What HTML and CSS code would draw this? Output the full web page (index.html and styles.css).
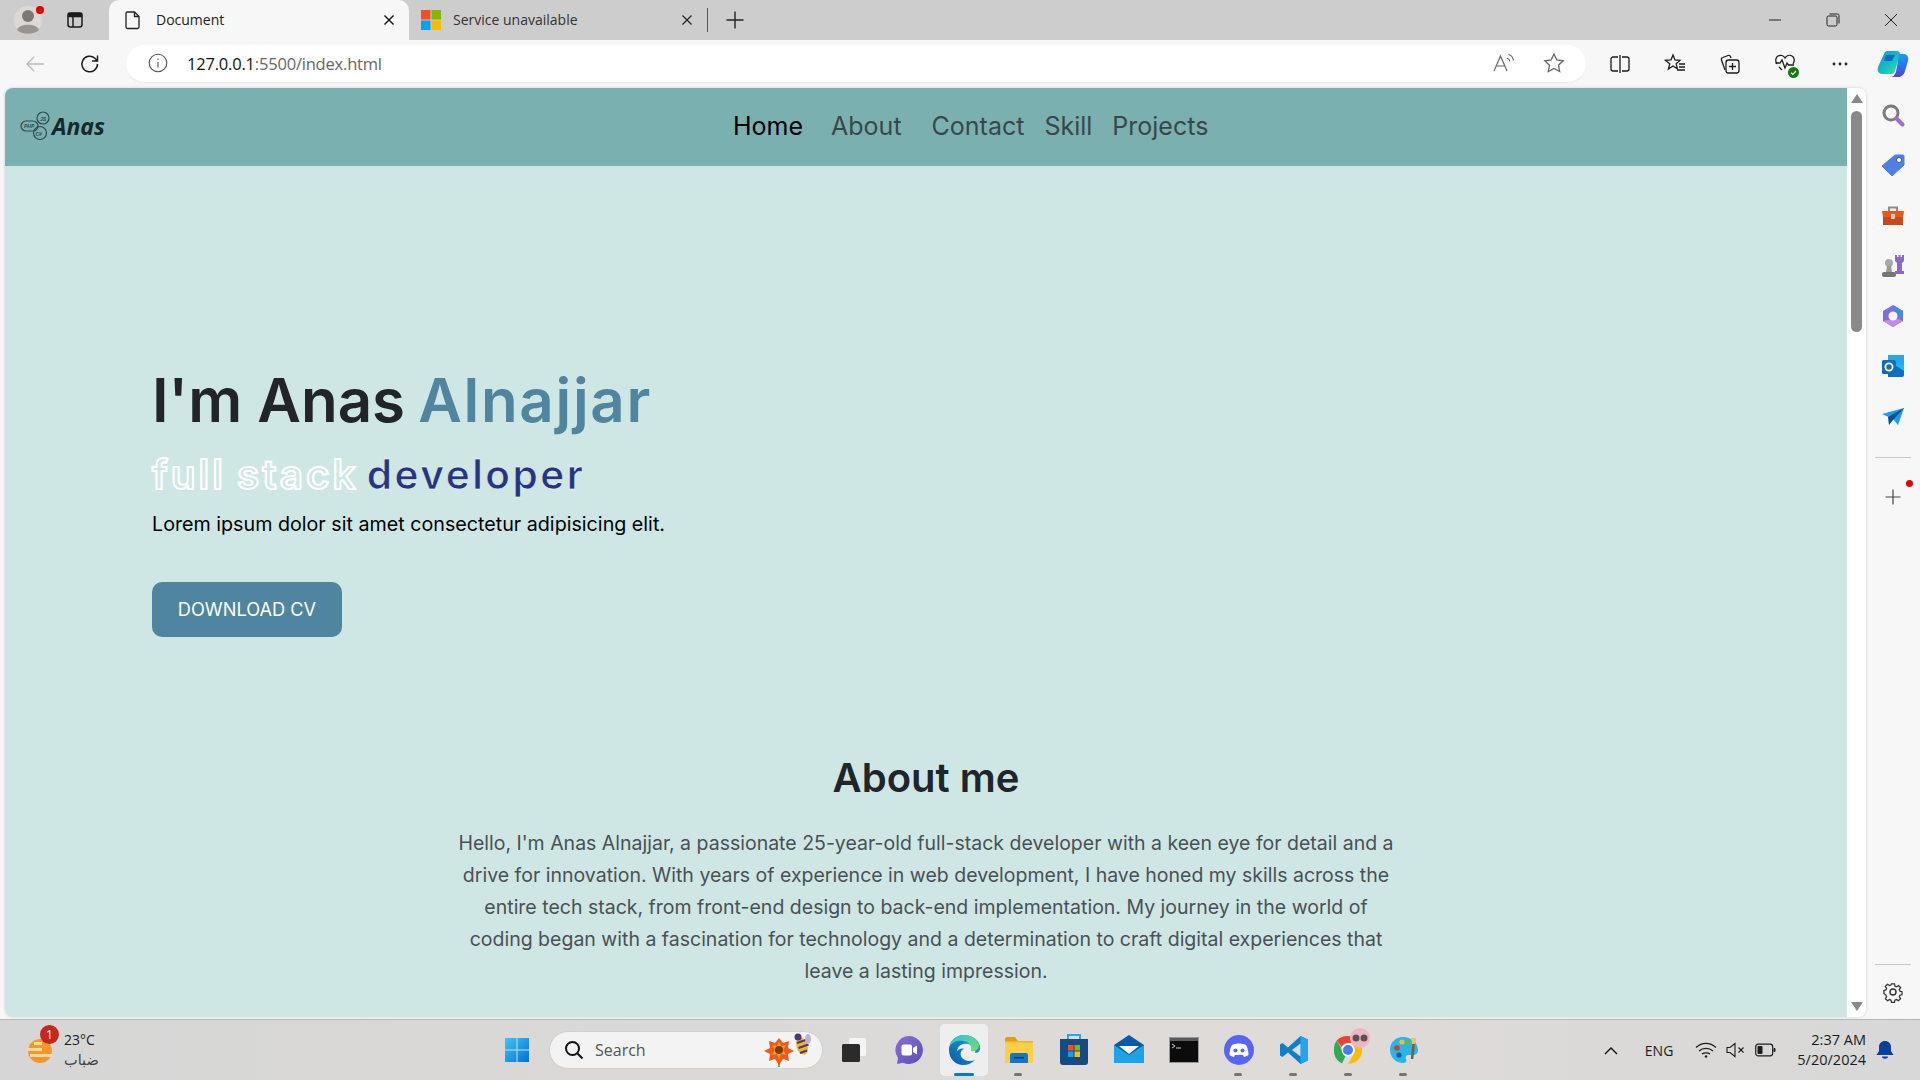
FILE: index.html
```html
<!DOCTYPE html>
<html lang="en">
<head>
  <meta charset="UTF-8">
  <title>Document</title>
  <link rel="stylesheet" href="styles.css">
</head>
<body>

<div class="tabstrip">
  <div class="profile">
    <svg width="34" height="34" viewBox="0 0 34 34"><circle cx="17" cy="17" r="14" fill="#dbd9d6"/><circle cx="17" cy="13" r="6" fill="#7d7875"/><path d="M6 27c2-7 20-7 22 0-5 5-17 5-22 0z" fill="#9a9591"/></svg>
    <span class="profile-dot"></span>
  </div>
  <div class="strip-btn">
    <svg width="20" height="20" viewBox="0 0 20 20" fill="none" stroke="#1c1c1c" stroke-width="1.5"><rect x="3" y="3" width="14" height="14" rx="2.5"/><path d="M8 6.5V17"/><path d="M3.5 3.5h13v3h-13z" fill="#1c1c1c"/></svg>
  </div>
  <div class="tab tab-active">
    <svg width="18" height="20" viewBox="0 0 18 20" fill="none" stroke="#222" stroke-width="1.3"><path d="M3.5 2h7l4.5 4.5V17a1.5 1.5 0 0 1-1.5 1.5h-10A1.5 1.5 0 0 1 2 17V3.5A1.5 1.5 0 0 1 3.5 2z"/><path d="M10.5 2v4.5H15"/></svg>
    <span class="tab-title">Document</span>
    <svg class="tab-close" width="12" height="12" viewBox="0 0 12 12" stroke="#111" stroke-width="1.4"><path d="M1.5 1.5l9 9M10.5 1.5l-9 9"/></svg>
  </div>
  <div class="tab">
    <svg width="20" height="20" viewBox="0 0 20 20"><rect width="9.5" height="9.5" fill="#f25022"/><rect x="10.5" width="9.5" height="9.5" fill="#7fba00"/><rect y="10.5" width="9.5" height="9.5" fill="#00a4ef"/><rect x="10.5" y="10.5" width="9.5" height="9.5" fill="#ffb900"/></svg>
    <span class="tab-title">Service unavailable</span>
    <svg class="tab-close" width="12" height="12" viewBox="0 0 12 12" stroke="#222" stroke-width="1.2"><path d="M1.5 1.5l9 9M10.5 1.5l-9 9"/></svg>
  </div>
  <span class="tab-sep"></span>
  <svg class="new-tab" width="20" height="20" viewBox="0 0 20 20" stroke="#222" stroke-width="1.4"><path d="M10 1.5v17M1.5 10h17"/></svg>
  <div class="win-controls">
    <svg width="14" height="14" viewBox="0 0 14 14" stroke="#222" stroke-width="1"><path d="M1 7h12"/></svg>
    <svg width="14" height="14" viewBox="0 0 14 14" fill="none" stroke="#222" stroke-width="1"><rect x="1" y="3" width="10" height="10" rx="1.5"/><path d="M3.5 1h8a1.5 1.5 0 0 1 1.5 1.5v8"/></svg>
    <svg width="14" height="14" viewBox="0 0 14 14" stroke="#222" stroke-width="1"><path d="M1 1l12 12M13 1L1 13"/></svg>
  </div>
</div>

<div class="toolbar">
  <svg class="tool-back" width="22" height="22" viewBox="0 0 22 22" fill="none" stroke="#bdbdbd" stroke-width="1.4"><path d="M20 11H3M10 4l-7 7 7 7"/></svg>
  <svg class="tool-reload" width="22" height="22" viewBox="0 0 22 22" fill="none" stroke="#1c1c1c" stroke-width="1.5"><path d="M18.5 11a7.8 7.8 0 1 1-2.6-5.8L18.5 8M18.5 2.5V8H13"/></svg>
  <div class="address">
    <svg width="20" height="20" viewBox="0 0 20 20" fill="none" stroke="#555" stroke-width="1.1"><circle cx="10" cy="10" r="8.8"/><path d="M10 9v5.5M10 5.6v1.4"/></svg>
    <span class="url"><b>127.0.0.1</b>:5500/index.html</span>
    <svg class="addr-read" width="24" height="22" viewBox="0 0 24 22" fill="none" stroke="#666" stroke-width="1.2"><path d="M2 19L8.5 4 15 19M4.5 14h8"/><path d="M15 6c1.500.5 2.500 1.700 3 3.500M16.500 2.500c2.800.7 4.500 3 5 6"/></svg>
    <svg class="addr-star" width="22" height="22" viewBox="0 0 22 22" fill="none" stroke="#666" stroke-width="1.3"><path d="M11 2l2.800 6 6.400.8-4.700 4.400 1.200 6.300L11 16.400l-5.700 3.100 1.200-6.300L1.800 8.800 8.200 8z"/></svg>
  </div>
  <div class="tool-icons">
    <svg width="22" height="22" viewBox="0 0 22 22" fill="none" stroke="#1c1c1c" stroke-width="1.3"><path d="M9 4H4a2 2 0 0 0-2 2v10a2 2 0 0 0 2 2h5M13 4h5a2 2 0 0 1 2 2v10a2 2 0 0 1-2 2h-5M11 2v18"/></svg>
    <svg width="22" height="22" viewBox="0 0 22 22" fill="none" stroke="#1c1c1c" stroke-width="1.3"><path d="M9 2l2 5 5 .4-3.800 3.400 1.200 5-4.400-2.800-4.600 3 1.300-5.200L1.500 7.400 7 7z"/><path d="M15 11h6M15 14h6M13 17h8"/></svg>
    <svg width="22" height="22" viewBox="0 0 22 22" fill="none" stroke="#1c1c1c" stroke-width="1.3"><path d="M6 17L2.500 7a2 2 0 0 1 1.300-2.500L9 2.500a2 2 0 0 1 2.500 1L12 5"/><rect x="7" y="7" width="13" height="13" rx="2.500"/><path d="M13.500 10v7M10 13.500h7"/></svg>
    <div class="health">
      <svg width="22" height="22" viewBox="0 0 22 22" fill="none" stroke="#1c1c1c" stroke-width="1.3"><path d="M3 11C1 8 1.500 4.500 4 3c2.500-1.500 5.500-.5 7 2 1.500-2.500 4.500-3.500 7-2 2.500 1.500 3 5 1 8"/><path d="M1.500 10H6l2-3 3 8 2-5 1.500 2H20M5 14l3 3"/></svg>
      <svg class="health-ok" width="11" height="11" viewBox="0 0 11 11"><circle cx="5.500" cy="5.500" r="5.500" fill="#107c10"/><path d="M3 5.700l1.800 1.700L8 4" fill="none" stroke="#fff" stroke-width="1.200"/></svg>
    </div>
    <svg width="22" height="22" viewBox="0 0 22 22" fill="#222"><circle cx="5" cy="11" r="1.400"/><circle cx="11" cy="11" r="1.400"/><circle cx="17" cy="11" r="1.400"/></svg>
  </div>
  <svg class="copilot" width="32" height="28" viewBox="0 0 32 28">
    <defs>
      <linearGradient id="copA" x1="0" y1="0" x2="1" y2="1"><stop offset="0" stop-color="#0f8fd8"/><stop offset=".6" stop-color="#19c3c0"/><stop offset="1" stop-color="#52e0a0"/></linearGradient>
      <linearGradient id="copB" x1="0" y1="0" x2="0" y2="1"><stop offset="0" stop-color="#1f9cf0"/><stop offset=".6" stop-color="#2c6ee8"/><stop offset="1" stop-color="#5a3fd0"/></linearGradient>
    </defs>
    <path d="M11 1h9c2 0 2.500 1 3 3l-5 17c-.5 2-2 3-4 3H5C1 24 0 20 1 17L7 4c.6-2 2-3 4-3z" fill="url(#copA)"/>
    <path d="M22 4h5c3 0 5 3 4 7l-3 10c-1 4-4 6-7 6H13c3 0 5-2 6-5z" fill="url(#copB)"/>
    <path d="M9 5h9l-3 6H7z" fill="#0b6fc0"/>
  </svg>
</div>

<div class="viewport">
  <div class="page-frame">
    <main class="page">
      <nav class="nav">
        <a class="logo">
          <svg width="32" height="30" viewBox="0 0 32 30" fill="none" stroke="#2e4a4c" stroke-width="1.2">
            <rect x="1" y="10" width="17" height="10" rx="5"/><circle cx="23" cy="7" r="6"/><circle cx="20" cy="22" r="6.500"/>
            <text x="4" y="17" class="logo-tiny">PHP</text><text x="20" y="10" class="logo-tiny">JS</text><text x="15.500" y="25" class="logo-tiny">C#</text>
          </svg>
          <span>Anas</span>
        </a>
        <div class="nav-links">
          <a class="nav-link nav-link-current">Home</a>
          <a class="nav-link">About</a>
          <a class="nav-link">Contact</a>
          <a class="nav-link">Skill</a>
          <a class="nav-link">Projects</a>
        </div>
      </nav>

      <section class="hero">
        <h1>I'm Anas <span class="accent">Alnajjar</span></h1>
        <h2><span class="outline">full stack</span> <span class="role">developer</span></h2>
        <p>Lorem ipsum dolor sit amet consectetur adipisicing elit.</p>
        <a class="btn">DOWNLOAD CV</a>
      </section>

      <section class="about">
        <h3>About me</h3>
        <p>Hello, I'm Anas Alnajjar, a passionate 25-year-old full-stack developer with a keen eye for detail and a drive for innovation. With years of experience in web development, I have honed my skills across the entire tech stack, from front-end design to back-end implementation. My journey in the world of coding began with a fascination for technology and a determination to craft digital experiences that leave a lasting impression.</p>
      </section>
    </main>
    <div class="scrollbar">
      <span class="arrow-up"></span>
      <span class="thumb"></span>
      <span class="arrow-down"></span>
    </div>
  </div>

  <aside class="sidebar">
    <svg width="24" height="24" viewBox="0 0 24 24" fill="none"><circle cx="10" cy="10" r="7" stroke="#7b7b7b" stroke-width="3"/><path d="M15.500 15.500l6 6" stroke="#9a6fd0" stroke-width="4" stroke-linecap="round"/></svg>
    <svg width="24" height="24" viewBox="0 0 24 24"><path d="M14 2h8a1 1 0 0 1 1 1v9L11 23 1 13z" fill="#4f80e0" stroke="#4f80e0" stroke-linejoin="round"/><circle cx="18" cy="7" r="2.500" fill="#fff" stroke="#2f55a8"/></svg>
    <svg width="24" height="24" viewBox="0 0 24 24"><path d="M8 7V3.500h8V7" fill="none" stroke="#8a8a8a" stroke-width="2"/><path d="M1 7h22l-1 6H2z" fill="#e8591f"/><path d="M2 13h20v8H2z" fill="#c8481a"/><rect x="10" y="10" width="4" height="5" fill="#c9c9c9"/></svg>
    <svg width="24" height="24" viewBox="0 0 24 24"><circle cx="8" cy="9" r="4" fill="#a9a9a9"/><path d="M6 12h4l1 6H5z" fill="#9a9a9a"/><rect x="1" y="18" width="14" height="5" rx="2" fill="#757575"/><path d="M14 1h2v2h1.500V1h2v2H21V1h2v6l-2 2v8h2v3h-9v-3h2V9l-2-2z" fill="#8e68c8"/></svg>
    <svg width="24" height="24" viewBox="0 0 24 24"><path d="M12 1l10 6v10l-10 6L2 17V7z" fill="#7c6fe0"/><path d="M12 1l10 6v6l-7-4z" fill="#3d8fe0"/><path d="M2 17l10 6 10-6-7-3z" fill="#c58ae8"/><circle cx="12" cy="12" r="4.500" fill="#f7f7f7"/></svg>
    <svg width="24" height="24" viewBox="0 0 24 24"><rect x="7" y="1" width="16" height="10" fill="#28a8ea"/><path d="M7 11h16v10a2 2 0 0 1-2 2H7z" fill="#0a6fc4"/><path d="M14 11l9 6v-6z" fill="#14c0f0"/><rect x="1" y="6" width="14" height="14" rx="1.500" fill="#0f6cbd"/><circle cx="8" cy="13" r="3.600" fill="none" stroke="#fff" stroke-width="1.800"/></svg>
    <svg width="24" height="24" viewBox="0 0 24 24"><path d="M1 9L23 3l-6 17-5-6z" fill="#1c9be6"/><path d="M23 3L7 12l1 8 4-5z" fill="#0d4e8e"/></svg>
    <span class="side-rule"></span>
    <div class="side-add">
      <svg width="16" height="16" viewBox="0 0 16 16" stroke="#444" stroke-width="1.200"><path d="M8 .5v15M.5 8h15"/></svg>
      <span class="side-dot"></span>
    </div>
    <span class="side-rule side-rule-low"></span>
    <svg class="side-gear" width="22" height="22" viewBox="0 0 22 22" fill="none" stroke="#333" stroke-width="1.400"><circle cx="11" cy="11" r="3"/><path d="M9.300 2h3.400l.5 2.600 1.700.7 2.200-1.500 2.400 2.400-1.500 2.200.7 1.700 2.300.6v3.400l-2.300.5-.7 1.700 1.400 2.100-2.400 2.400-2.200-1.400-1.700.7-.5 2.300H9.300l-.5-2.300-1.700-.7-2.200 1.400-2.400-2.400 1.400-2.100-.7-1.700L.9 12.700V9.300l2.300-.6.700-1.700-1.500-2.200 2.400-2.400 2.200 1.500 1.700-.7z" transform="translate(1.100 1.100) scale(.9)"/></svg>
  </aside>
</div>

<footer class="taskbar">
  <div class="weather">
    <div class="weather-icon">
      <svg width="32" height="32" viewBox="0 0 32 32"><circle cx="16" cy="17" r="12" fill="#f4972a"/><path d="M2 14h16v3H2zM6 20h22v3H6z" fill="#f0d9a8"/><path d="M10 8h8v3h-8z" fill="#f5dd8f"/></svg>
      <span class="weather-badge">1</span>
    </div>
    <div class="weather-text">
      <span>23°C</span>
      <span class="weather-desc">ضباب</span>
    </div>
  </div>

  <div class="task-center">
    <div class="task-item">
      <svg width="26" height="26" viewBox="0 0 26 26"><defs><linearGradient id="winG" x1="0" y1="0" x2="1" y2="1"><stop offset="0" stop-color="#3fc5f7"/><stop offset="1" stop-color="#0072d2"/></linearGradient></defs><path d="M1 1h11.500v11.500H1zM13.500 1H25v11.500H13.500zM1 13.500h11.500V25H1zM13.500 13.500H25V25H13.500z" fill="url(#winG)"/></svg>
    </div>
    <div class="search">
      <svg width="20" height="20" viewBox="0 0 20 20" fill="none" stroke="#111" stroke-width="2"><circle cx="8.500" cy="8.500" r="6.500"/><path d="M13.500 13.500l5 5"/></svg>
      <span>Search</span>
      <svg class="search-art" width="50" height="34" viewBox="0 0 50 34"><path d="M15 30v4" stroke="#5d8a2c" stroke-width="1.500"/><path d="M15 5l4 5 6-2-1 7 6 3-6 3 1 7-6-2-4 6-4-6-6 2 1-7-6-3 6-3-1-7 6 2z" fill="#ef5a1c"/><path d="M15 8l2 5 5-1-3 5 3 5-5-1-2 5-2-5-5 1 3-5-3-5 5 1z" fill="#f9a11b"/><circle cx="15" cy="17" r="4" fill="#7a3c12"/><ellipse cx="38" cy="13" rx="5.500" ry="9" transform="rotate(-20 38 13)" fill="#f0b429"/><path d="M33 10l10-3.500M34.500 15l10-3.500M36 20l7-2.500" stroke="#4a3a78" stroke-width="2"/><circle cx="34" cy="4" r="3.500" fill="#4a3a78"/><ellipse cx="44" cy="6" rx="3" ry="5" fill="#b9b3df"/></svg>
    </div>
    <div class="task-item">
      <svg width="28" height="28" viewBox="0 0 28 28"><rect x="9" y="2" width="17" height="18" rx="1.500" fill="#f4f4f4"/><rect x="2" y="8" width="18" height="18" rx="1.500" fill="#2b2b2b"/></svg>
    </div>
    <div class="task-item">
      <svg width="30" height="30" viewBox="0 0 30 30"><defs><linearGradient id="meetG" x1="0" y1="0" x2="1" y2="1"><stop offset="0" stop-color="#8a6fd8"/><stop offset="1" stop-color="#5b4fb0"/></linearGradient></defs><path d="M15 1a14 14 0 1 1-6 26.700L3 29l1-6A14 14 0 0 1 15 1z" fill="url(#meetG)"/><rect x="7.500" y="9.500" width="10.500" height="11" rx="2" fill="#fff"/><path d="M19 13l4-2.500v9L19 17z" fill="#fff"/></svg>
    </div>
    <div class="task-item task-active">
      <svg width="32" height="32" viewBox="0 0 32 32"><defs><linearGradient id="edgeA" x1="0" y1="1" x2="1" y2="0"><stop offset="0" stop-color="#0c59a4"/><stop offset="1" stop-color="#1ba9e0"/></linearGradient><linearGradient id="edgeB" x1="0" y1="0" x2="1" y2="1"><stop offset="0" stop-color="#28c2e0"/><stop offset="1" stop-color="#7ddc6a"/></linearGradient></defs><path d="M16 1C7 1 1 8 1 16c0 9 7 15 14 15 5 0 9-2 12-5-5 2-12 1-14-4-1-3 0-6 3-7-2-1-5 0-7 2 1-6 6-8 11-7 6 1 8 5 7 9 4 0 6-3 5-7C31 6 24 1 16 1z" fill="url(#edgeA)"/><path d="M16 1C8 1 3 6 2 12c3-5 9-6 13-5 7 1 9 6 8 10 4 1 8-2 8-6C30 5 23 1 16 1z" fill="url(#edgeB)"/></svg>
      <span class="task-mark task-mark-blue"></span>
    </div>
    <div class="task-item">
      <svg width="30" height="28" viewBox="0 0 30 28"><path d="M1 3a2 2 0 0 1 2-2h8l3 4v4H1z" fill="#dda011"/><rect x="1" y="5" width="28" height="22" rx="1.500" fill="#fbd046"/><rect x="1" y="5" width="28" height="1.500" fill="#f2b32a"/><path d="M6 19a2 2 0 0 1 2-2h14a2 2 0 0 1 2 2v8H6z" fill="#1277c9"/><rect x="10" y="21" width="10" height="1.500" fill="#0b3a70"/></svg>
      <span class="task-mark"></span>
    </div>
    <div class="task-item">
      <svg width="30" height="32" viewBox="0 0 30 32"><path d="M9 5V1h12v4" fill="none" stroke="#2aa6e0" stroke-width="2"/><path d="M1 5h28v23a3 3 0 0 1-3 3H4a3 3 0 0 1-3-3z" fill="#154a85"/><rect x="9" y="11" width="5.500" height="5.500" fill="#f25022"/><rect x="15.500" y="11" width="5.500" height="5.500" fill="#7fba00"/><rect x="9" y="17.500" width="5.500" height="5.500" fill="#00a4ef"/><rect x="15.500" y="17.500" width="5.500" height="5.500" fill="#ffb900"/></svg>
    </div>
    <div class="task-item">
      <svg width="30" height="30" viewBox="0 0 30 30"><path d="M15 0l15 10v18H0V10z" fill="#0a5aa8"/><path d="M0 10v18h30V10L15 20z" fill="#1ea2e8"/><path d="M5 11h20l-10 8z" fill="#f4f8fb"/></svg>
    </div>
    <div class="task-item">
      <svg width="30" height="26" viewBox="0 0 30 26"><rect x=".5" y=".5" width="29" height="25" fill="#0c0c0c" stroke="#9a9a9a"/><rect x="1" y="1" width="28" height="3" fill="#5a5a5a"/><path d="M3 7l3 2-3 2M7 11h5" stroke="#ccc" fill="none"/></svg>
    </div>
    <div class="task-item">
      <svg width="30" height="30" viewBox="0 0 30 30"><circle cx="15" cy="15" r="15" fill="#5865f2"/><path d="M8 10c4-2 10-2 14 0 2 3 2.500 7 2.500 10-1.500 1-3 1.700-4.500 2l-1-2h-8l-1 2c-1.500-.3-3-1-4.500-2C5.500 17 6 13 8 10z" fill="#fff"/><circle cx="11.500" cy="15.500" r="2" fill="#5865f2"/><circle cx="18.500" cy="15.500" r="2" fill="#5865f2"/></svg>
      <span class="task-mark"></span>
    </div>
    <div class="task-item">
      <svg width="30" height="30" viewBox="0 0 30 30"><path d="M21.500 1L29 4.500v21L21.500 29 9 17.500 3.500 22 1 20.500V9.500L3.500 8 9 12.500z" fill="#0f7fcc"/><path d="M21.500 1L29 4.500v21L21.500 29z" fill="#22a5ec"/><path d="M21.500 8.500L13 15l8.500 6.500z" fill="#dcdcdc"/></svg>
      <span class="task-mark"></span>
    </div>
    <div class="task-item">
      <svg width="32" height="32" viewBox="0 0 32 32"><path d="M15 2a14 14 0 0 1 12.200 7H15a7 7 0 0 0-6.300 4L3.800 6.500A14 14 0 0 1 15 2z" fill="#ea4335"/><path d="M1 16A14 14 0 0 1 3.800 6.500L9.500 16a6 6 0 0 0 3 6l-3.500 7.500A14 14 0 0 1 1 16z" fill="#34a853"/><path d="M27.200 9A14 14 0 0 1 15 30l5.500-9.500A6 6 0 0 0 20 12z" fill="#fbbc05"/><circle cx="15" cy="16" r="6.500" fill="#fff"/><circle cx="15" cy="16" r="5" fill="#3f7fee"/></svg>
      <span class="chrome-avatar"><svg width="20" height="20" viewBox="0 0 20 20"><circle cx="10" cy="10" r="10" fill="#f0b6c0"/><circle cx="6" cy="10" r="3.500" fill="#555"/><circle cx="14" cy="10" r="3.500" fill="#555"/></svg></span>
      <span class="task-mark"></span>
    </div>
    <div class="task-item">
      <svg width="30" height="30" viewBox="0 0 30 30"><path d="M14 2C6 2 1 8 1 15s6 13 13 13c3 0 4-2 3-4s0-4 3-4h4c3 0 5-2 5-5C29 8 22 2 14 2z" fill="#2ab4ec"/><circle cx="8" cy="13" r="2.800" fill="#c8402c"/><circle cx="13" cy="7" r="2.600" fill="#f2c21b"/><circle cx="19" cy="8" r="2.400" fill="#6bb83e"/><circle cx="10" cy="20" r="2.600" fill="#0b5ea8"/><path d="M25 6l-2 18" stroke="#8b5a2b" stroke-width="2.500"/><path d="M22 3h5l-1 6h-3z" fill="#e8c070"/></svg>
      <span class="task-mark"></span>
    </div>
  </div>

  <div class="tray">
    <svg class="tray-chevron" width="14" height="9" viewBox="0 0 14 9" fill="none" stroke="#111" stroke-width="1.400"><path d="M1 8l6-6 6 6"/></svg>
    <span class="tray-lang">ENG</span>
    <svg class="tray-wifi" width="22" height="16" viewBox="0 0 22 16" fill="none" stroke="#1c1c1c" stroke-width="1.300"><path d="M1 5.500c6-5.500 14-5.500 20 0M4 9c4-3.500 10-3.500 14 0M7 12c2-1.600 6-1.600 8 0"/><circle cx="11" cy="14.500" r="1.200" fill="#1c1c1c" stroke="none"/></svg>
    <svg class="tray-vol" width="20" height="16" viewBox="0 0 20 16" fill="none" stroke="#1c1c1c" stroke-width="1.100"><path d="M1 5.500h3L9 1.500v13l-5-4H1z"/><path d="M12.500 5.500l5 5M17.500 5.500l-5 5"/></svg>
    <svg class="tray-batt" width="21" height="14" viewBox="0 0 21 14"><rect x=".7" y="1.200" width="17" height="11.600" rx="2.500" fill="none" stroke="#1c1c1c" stroke-width="1.200"/><rect x="2.500" y="3" width="5" height="8" rx="1" fill="#1c1c1c"/><rect x="18.500" y="5" width="2" height="4" rx="1" fill="#1c1c1c"/></svg>
    <div class="tray-clock">
      <span>2:37 AM</span>
      <span>5/20/2024</span>
    </div>
    <svg class="tray-bell" width="18" height="20" viewBox="0 0 18 20"><path d="M9 1c3.500 0 6 2.500 6 6v4l2.500 4H.5L3 11V7c0-3.500 2.500-6 6-6z" fill="#0a3f9c"/><path d="M6 16.500h6c0 3-6 3-6 0z" fill="#0a3f9c"/></svg>
  </div>
</footer>

</body>
</html>
```

FILE: styles.css
```css
* {
  box-sizing: border-box;
}

body {
  margin: 0;
  height: 100vh;
  overflow: hidden;
  display: flex;
  flex-direction: column;
  font-family: "Open Sans", "Noto Sans", sans-serif;
  background-color: #f7f7f7;
  color: #1c1c1c;
}

svg {
  display: block;
  flex-shrink: 0;
}

/* tab strip */
.tabstrip {
  height: 40px;
  display: flex;
  align-items: center;
  background-color: #cdcdcd;
  padding-left: 11px;
}

.profile {
  position: relative;
  width: 34px;
  height: 34px;
}

.profile-dot {
  position: absolute;
  top: 3px;
  right: 1px;
  width: 8px;
  height: 8px;
  border-radius: 50%;
  background-color: #e20000;
}

.strip-btn {
  margin-left: 20px;
  width: 44px;
}

.tab {
  width: 300px;
  height: 40px;
  display: flex;
  align-items: center;
  padding: 0 14px 0 12px;
  font-size: 14px;
}

.tab-active {
  background-color: #f7f7f7;
  border-radius: 10px 10px 0 0;
  padding-left: 15px;
  color: #222;
}

.tab-title {
  margin-left: 14px;
  padding-bottom: 2px;
  flex: 1;
}

.tab-active + .tab {
  width: 298px;
  color: #333;
}

.tab-active + .tab .tab-title {
  margin-left: 12px;
}

.tab-sep {
  width: 1px;
  height: 24px;
  background-color: #555;
}

.new-tab {
  margin-left: 17px;
}

.win-controls {
  margin-left: auto;
  display: flex;
  gap: 44px;
  padding-right: 22px;
}

/* toolbar */
.toolbar {
  height: 48px;
  display: flex;
  align-items: center;
  padding-left: 24px;
  background-color: #f7f7f7;
}

.tool-reload {
  margin-left: 33px;
}

.address {
  width: 1460px;
  height: 37px;
  margin-left: 25px;
  margin-bottom: 2px;
  padding: 0 21px 0 22px;
  display: flex;
  align-items: center;
  background-color: #fff;
  border-radius: 19px;
  box-shadow: 0 1px 2px rgba(0, 0, 0, 0.06);
}

.url {
  margin-left: 19px;
  font-size: 16.5px;
  color: #666;
  flex: 1;
  letter-spacing: -0.2px;
}

.url b {
  font-weight: 400;
  color: #111;
}

.addr-star {
  margin-left: 27px;
}

.tool-icons {
  display: flex;
  align-items: center;
  gap: 33px;
  margin-left: 23px;
}

.health {
  position: relative;
}

.health-ok {
  position: absolute;
  right: -3px;
  bottom: -3px;
}

.copilot {
  margin-left: 26px;
}

/* page area */
.viewport {
  height: 931px;
  display: flex;
  padding-left: 5px;
}

.page-frame {
  display: flex;
  width: 1861px;
  height: 929px;
  border-radius: 8px;
  overflow: hidden;
  box-shadow: 0 0 3px rgba(0, 0, 0, 0.18);
}

.page {
  width: 1842px;
  background-color: #cee7e4;
  font-family: Inter, sans-serif;
}

.nav {
  height: 78px;
  display: flex;
  align-items: center;
  padding: 0 0 2px 15px;
  background-color: #7ab0b0;
}

.logo {
  display: flex;
  align-items: center;
  width: 713px;
  font-family: "Open Sans", sans-serif;
  font-weight: 700;
  font-style: italic;
  font-size: 23px;
  color: #16282a;
}

.logo-tiny {
  font-family: "Liberation Sans", sans-serif;
  font-size: 5px;
  font-weight: 700;
  fill: #2e4a4c;
  stroke: none;
}

.nav-links {
  display: flex;
  font-size: 25px;
}

.nav-link {
  color: #38484a;
  margin-right: 20px;
}

.nav-link:nth-child(2) {
  margin-right: 30px;
}

.nav-link-current {
  color: #000;
  margin-right: 28px;
}

.hero {
  padding: 197px 0 0 147px;
}

h1 {
  margin: 0;
  font-size: 60px;
  font-weight: 600;
  line-height: 74px;
  color: #212529;
}

.accent {
  margin-left: -2px;
  color: #4f859e;
  letter-spacing: 1.7px;
}

h2 {
  margin: 14px 0 0;
  font-size: 40.5px;
  font-weight: 600;
  line-height: 48px;
  word-spacing: -2px;
}

.outline {
  color: transparent;
  letter-spacing: 3px;
  -webkit-text-stroke: 2px #fff;
}

.role {
  color: #263580;
  letter-spacing: 2.5px;
  -webkit-text-stroke: 0.5px #fff;
}

.hero p {
  margin: 10px 0 0;
  font-size: 19.7px;
  line-height: 30px;
  color: #000;
}

.btn {
  display: inline-block;
  margin-top: 43px;
  width: 190px;
  height: 55px;
  line-height: 55px;
  text-align: center;
  font-size: 18.2px;
  font-weight: 400;
  color: #fff;
  background-color: #4f859e;
  border-radius: 10px;
}

.about {
  margin-top: 118px;
  text-align: center;
}

h3 {
  margin: 0;
  font-size: 40px;
  font-weight: 600;
  line-height: 46px;
  color: #212529;
}

.about p {
  width: 950px;
  margin: 26px auto 0;
  font-size: 19.5px;
  line-height: 32px;
  color: #4a5054;
}

.scrollbar {
  width: 19px;
  padding-top: 6px;
  display: flex;
  flex-direction: column;
  align-items: center;
  background-color: #fff;
}

.arrow-up {
  border: solid transparent;
  border-width: 0 6.5px 9px;
  border-bottom-color: #8a8a8a;
}

.thumb {
  width: 11px;
  height: 221px;
  margin-top: 8px;
  border-radius: 6px;
  background-color: #8a8a8a;
}

.arrow-down {
  margin-top: auto;
  margin-bottom: 6px;
  border: solid transparent;
  border-width: 9px 6.5px 0;
  border-top-color: #8a8a8a;
}

.sidebar {
  width: 54px;
  display: flex;
  flex-direction: column;
  align-items: center;
  padding-top: 15px;
  gap: 26.300px;
}

.side-rule {
  width: 36px;
  height: 1px;
  margin-top: 2px;
  background-color: #c8c8c8;
}

.side-rule-low {
  margin-top: auto;
}

.side-add {
  position: relative;
  margin-top: 5px;
}

.side-dot {
  position: absolute;
  top: -9px;
  right: -12px;
  width: 7px;
  height: 7px;
  border-radius: 50%;
  background-color: #e20000;
}

.side-gear {
  margin-bottom: 16px;
  margin-top: -10px;
}

/* taskbar */
.taskbar {
  flex: 1;
  display: flex;
  align-items: center;
  border-top: 1px solid #b5b5b5;
  background: linear-gradient(90deg, #d6d6d6 0%, #dcdad8 45%, #dfdbd8 65%, #d8d8d8 100%);
  font-family: "Open Sans", "DejaVu Sans", sans-serif;
}

.weather {
  width: 497px;
  padding-left: 24px;
  display: flex;
  align-items: center;
}

.weather-icon {
  position: relative;
  width: 32px;
  height: 32px;
}

.weather-badge {
  position: absolute;
  top: -9px;
  left: 16px;
  width: 19px;
  height: 19px;
  border-radius: 50%;
  background-color: #c4281c;
  color: #fff;
  font-size: 12px;
  line-height: 19px;
  text-align: center;
}

.weather-text {
  display: flex;
  flex-direction: column;
  margin-left: 8px;
  font-size: 14px;
  line-height: 21px;
}

.weather-desc {
  font-family: "DejaVu Sans", sans-serif;
  font-size: 14.5px;
  color: #444;
}

.task-center {
  display: flex;
  align-items: center;
  gap: 15px;
}

.task-item {
  position: relative;
  width: 40px;
  height: 52px;
  display: flex;
  align-items: center;
  justify-content: center;
}

.task-active::before {
  content: "";
  position: absolute;
  top: 0;
  bottom: 0;
  left: -4px;
  right: -4px;
  background-color: #eeeeee;
  border-radius: 5px;
}

.task-active svg {
  position: relative;
}

.task-mark {
  position: absolute;
  bottom: 0;
  left: 15px;
  width: 8px;
  height: 3px;
  border-radius: 2px;
  background-color: #757575;
}

.task-mark-blue {
  left: 10px;
  width: 20px;
  background-color: #0078d4;
}

.chrome-avatar {
  position: absolute;
  top: 4px;
  right: -1px;
}

.search {
  width: 274px;
  height: 38px;
  margin: 0 -4px 0 -3px;
  padding: 0 8px 0 14px;
  display: flex;
  align-items: center;
  background-color: #f3f3f3;
  border: 1px solid #d0d0d0;
  border-radius: 19px;
  font-size: 16px;
  color: #555;
}

.search span {
  margin-left: 11px;
  flex: 1;
}

.tray {
  margin-left: auto;
  padding-right: 26px;
  display: flex;
  align-items: center;
  font-size: 14px;
  color: #1c1c1c;
}

.tray-lang {
  margin-left: 27px;
}

.tray-wifi {
  margin-left: 22px;
}

.tray-vol {
  margin-left: 9px;
}

.tray-batt {
  margin-left: 9px;
}

.tray-clock {
  margin-left: 21px;
  display: flex;
  flex-direction: column;
  align-items: flex-end;
  line-height: 20px;
  font-size: 14.5px;
}

.tray-bell {
  margin-left: 10px;
}
```
